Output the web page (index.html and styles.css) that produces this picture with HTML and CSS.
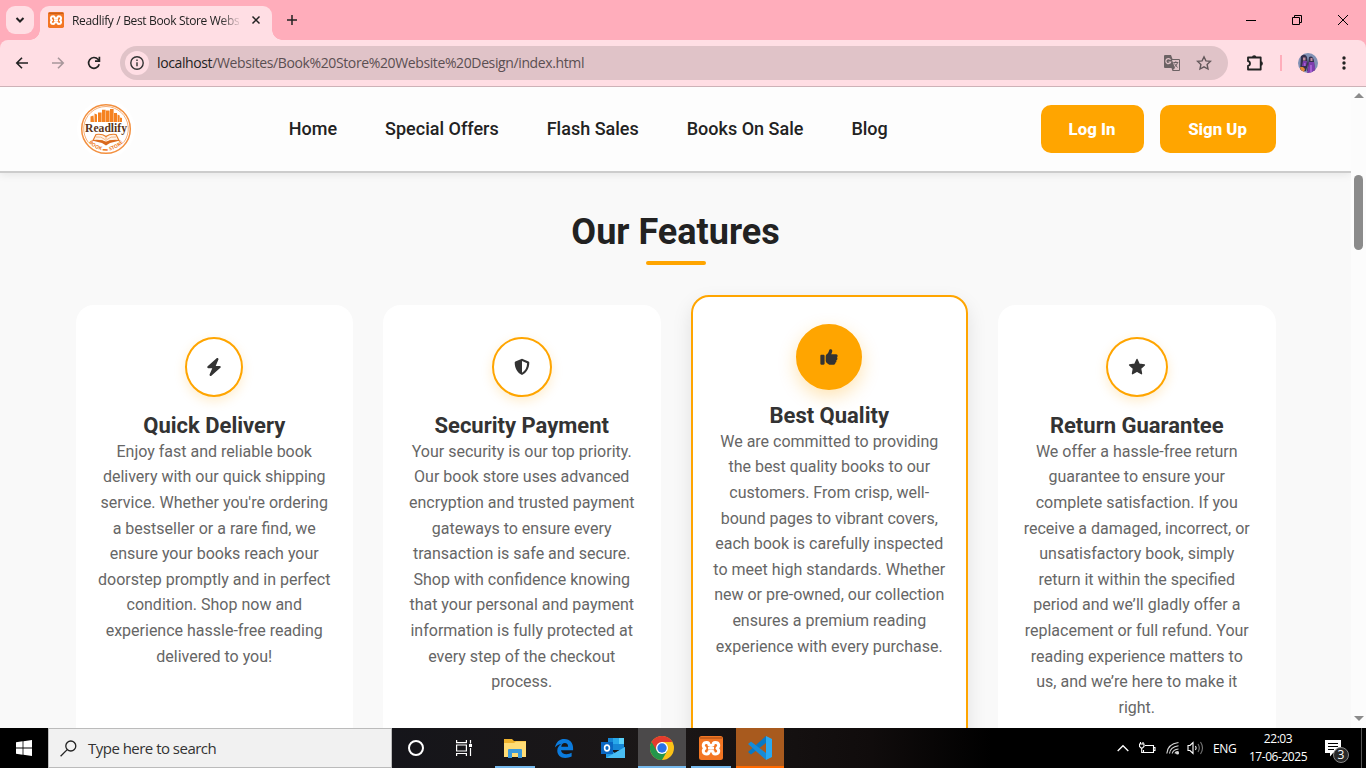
FILE: index.html
```html
<!DOCTYPE html>
<html lang="en">
<head>
<meta charset="utf-8">
<title>Readlify / Best Book Store Website</title>
<link rel="stylesheet" href="styles.css">
</head>
<body>
<svg class="defs" width="0" height="0">
  <symbol id="xampp" viewBox="0 0 24 24">
    <rect width="24" height="24" rx="2.5" fill="#f37623"/>
    <path d="M1 1h22v2H1z" fill="#c95f1b"/>
    <path d="M7.800 6.500C3.500 6.500 3.500 10.500 6 12.300 3.500 14 3.500 18 7.800 18q2.200 0 2.200-2.500 2-1 4 0 0 2.500 2.200 2.500c4.300 0 4.300-4 1.800-5.700 2.500-1.800 2.500-5.800-1.800-5.800Q14 6.500 14 9q-2 1-4 0 0-2.500-2.200-2.500z" fill="#f37623" stroke="#fff" stroke-width="3" stroke-linejoin="round"/>
    <path d="M9 12.200h6" stroke="#fff" stroke-width="2.600"/>
  </symbol>
</svg>
<div class="screen">
  <div class="tabstrip">
    <div class="tab-search"><svg width="10" height="10" viewBox="0 0 10 10"><path d="M1.500 3 5 6.500 8.500 3" fill="none" stroke="#222" stroke-width="2"/></svg></div>
    <div class="tab">
      <svg class="favicon" width="16" height="16"><use href="#xampp"/></svg>
      <span class="tab-title">Readlify / Best Book Store Webs</span>
      <svg class="tab-close" width="10" height="10" viewBox="0 0 10 10"><path d="m1.500 1.500 7 7m0-7-7 7" stroke="#222" stroke-width="1.500"/></svg>
    </div>
    <svg class="new-tab" width="12" height="12" viewBox="0 0 12 12"><path d="M6 1v10M1 6h10" stroke="#222" stroke-width="1.500"/></svg>
    <div class="win-controls">
      <svg width="12" height="12" viewBox="0 0 12 12"><path d="M1 6.500h10" stroke="#000"/></svg>
      <svg width="12" height="12" viewBox="0 0 12 12" fill="none" stroke="#000"><path d="M1.500 3.500h7v7h-7zM3.500 3.500v-2h7v7h-2"/></svg>
      <svg width="12" height="12" viewBox="0 0 12 12"><path d="m1 1 10 10m0-10L1 11" stroke="#000"/></svg>
    </div>
  </div>
  <div class="toolbar">
    <div class="nav-icons">
      <svg width="14" height="14" viewBox="0 0 14 14" fill="none" stroke="#222" stroke-width="1.600"><path d="M13 7H2M7 1.800 1.800 7 7 12.200"/></svg>
      <svg width="14" height="14" viewBox="0 0 14 14" fill="none" stroke="#a8979b" stroke-width="1.600"><path d="M1 7H12M7 1.800 12.200 7 7 12.200"/></svg>
      <svg width="14" height="14" viewBox="0 0 14 14" fill="none" stroke="#222" stroke-width="1.700"><path d="M12.200 8.300A5.400 5.400 0 1 1 11 3.300L12.500 5"/><path d="M12.400 .8v4.400H8"/></svg>
    </div>
    <div class="omnibox">
      <div class="info"><svg width="16" height="16" viewBox="0 0 16 16" fill="none" stroke="#333" stroke-width="1.400"><circle cx="8" cy="8" r="6.200"/><path d="M8 7.300v4M8 4.500v1.500"/></svg></div>
      <span class="url"><b>localhost</b>/Websites/Book%20Store%20Website%20Design/index.html</span>
      <svg class="translate" width="18" height="18" viewBox="0 0 18 18"><path d="M2 1h6l1.500 4H16q1 0 1 1v10q0 1-1 1H9.500L8.500 14H2q-1 0-1-1V2q0-1 1-1z" fill="#6c6264"/><path d="M9 6h7v10h-6l2-2z" fill="#e0c3c8"/><path d="M7.500 5.800A2.500 2.500 0 1 0 7.700 8H5.500" fill="none" stroke="#e0c3c8" stroke-width="1.200"/><path d="M10.300 8.500h5M12.800 7.300v1.200M14.500 8.500c-.4 2-1.800 3.500-3 4.500M11.300 9.500l3.200 4" fill="none" stroke="#6c6264"/></svg>
      <svg class="star" width="16" height="16" viewBox="0 0 16 16"><path d="m8 1.800 1.900 4.100 4.500.5-3.300 3.100.9 4.500L8 11.800 4 14l.9-4.500-3.300-3.100 4.500-.5z" fill="none" stroke="#63585b" stroke-width="1.400"/></svg>
    </div>
    <svg class="puzzle" width="18" height="18" viewBox="0 0 18 18"><path d="M2 3.500h12.700v12H2v-3.700q2-.3 2-2.300t-2-2.300z" fill="none" stroke="#222" stroke-width="1.800" stroke-linejoin="round"/><path d="M6 3.500a2.200 2.200 0 0 1 4.400 0zM14.700 7.300a2.200 2.200 0 0 1 0 4.400z" fill="#222"/></svg>
    <i class="divider"></i>
    <svg class="avatar" width="20" height="20" viewBox="0 0 20 20"><clipPath id="av"><circle cx="10" cy="10" r="10"/></clipPath><g clip-path="url(#av)"><path fill="#8090b4" d="M0 0h20v20H0z"/><path fill="#352f4e" d="M3 3q4-3 6 1l1 7-2 7H2zM11 4q4-2 5 4l1 10H9z"/><path fill="#7d3cad" d="M11 9l5 0 2 11H9zM5 8h4l-1 5H4z"/><path fill="#c28fa0" d="M5 4.500h2.500v3H5zM12.500 5h2v3h-2z"/><path fill="#e38a38" d="M2 14h3l2 2-1 3H3z"/><path fill="#a55fd0" d="M12 12h2v8h-2zM6 10h1.500v3H6z"/></g></svg>
    <svg class="more" width="4" height="14" viewBox="0 0 4 14" fill="#222"><circle cx="2" cy="2" r="1.700"/><circle cx="2" cy="7" r="1.700"/><circle cx="2" cy="12" r="1.700"/></svg>
  </div>

  <div class="viewport">
    <div class="page">
      <header class="site-header">
        <div class="container header-row">
          <svg class="logo" width="60" height="60" viewBox="0 0 60 60">
            <circle cx="30" cy="30" r="29" fill="#fff"/>
            <circle cx="30" cy="30" r="24.300" fill="none" stroke="#f3903f" stroke-width="1.500"/><path d="M12.400 43.500A22.300 22.300 0 1 1 47.600 43.500" fill="none" stroke="#f5a669" stroke-width=".9"/>
            <path fill="#f58220" d="M14.500 17.500l3-1 .5 6.500h-3.500zM18.500 14.500l2.500 1V23h-2.500zM22 13.500h3.600V23H22zM26 10.800h3.600V23H26zM30 11.500h3.600V23H30zM34 10h3.600v13H34zM38 14h3v9h-3zM41.500 15.500l2.200 1V23h-2.200zM44 18.500l2 .5v4h-2z"/>
            <text class="logo-name" x="30" y="32.500" text-anchor="middle" textLength="42" lengthAdjust="spacingAndGlyphs">Readlify</text>
            <path d="M30 37.500q-4-3-10-2L17 41.500q8-1 13 2 5-3 13-2L40 35.500Q34 34.500 30 37.500z" fill="#fff3e8" stroke="#e97d28" stroke-width="1.200"/><path d="M30 38v5M20 38q5-1 9 2.500M40 38q-5-1-9 2.500" fill="none" stroke="#f19a57" stroke-width=".7"/><path d="M16 41.500q10-1.500 14 1.500 4-3 14-1.500l-10 2.500-4 2.500-4-2.500z" fill="#d9681d"/>
            <path id="arc" d="M11 41A22.300 22.300 0 0 0 49 41" fill="none"/>
            <text class="logo-sub"><textPath href="#arc" startOffset="50%" text-anchor="middle">BOOK ▬ STORE</textPath></text>
          </svg>
          <nav class="menu"><a>Home</a><a>Special Offers</a><a>Flash Sales</a><a>Books On Sale</a><a>Blog</a></nav>
          <div class="actions"><a class="btn login">Log In</a><a class="btn signup">Sign Up</a></div>
        </div>
      </header>
      <main class="features">
        <h2>Our Features</h2>
        <div class="container cards">
          <article class="card">
            <div class="icon bolt"><svg width="18" height="18" viewBox="0 0 512 512"><path transform="translate(32 0)" d="M349.400 44.600c5.900-13.700 1.500-29.700-10.600-38.500s-28.600-8-39.900 1.800l-256 224c-10 8.800-13.600 22.900-8.900 35.300S50.700 288 64 288h111.500L98.600 467.400c-5.900 13.700-1.500 29.700 10.600 38.500s28.600 8 39.900-1.800l256-224c10-8.800 13.600-22.900 8.900-35.300s-16.600-20.700-30-20.700H272.500L349.400 44.600z"/></svg></div>
            <h3>Quick Delivery</h3>
            <p>Enjoy fast and reliable book<br>delivery with our quick shipping<br>service. Whether you're ordering<br>a bestseller or a rare find, we<br>ensure your books reach your<br>doorstep promptly and in perfect<br>condition. Shop now and<br>experience hassle-free reading<br>delivered to you!</p>
          </article>
          <article class="card">
            <div class="icon shield"><svg width="18" height="18" viewBox="0 0 18 18"><path fill-rule="evenodd" d="M9 .8 15.600 3.500q.7.300.7 1C16.300 10 13.700 14.900 9 17 4.300 14.900 1.700 10 1.700 4.500q0-.7.7-1zM9 3v11.700c3.200-1.800 5-5.300 5.100-9.500z"/></svg></div>
            <h3>Security Payment</h3>
            <p>Your security is our top priority.<br>Our book store uses advanced<br>encryption and trusted payment<br>gateways to ensure every<br>transaction is safe and secure.<br>Shop with confidence knowing<br>that your personal and payment<br>information is fully protected at<br>every step of the checkout<br>process.</p>
          </article>
          <article class="card active">
            <div class="icon thumb"><svg width="16" height="16" viewBox="0 0 512 512"><path d="M313.400 32.900c26 5.200 42.900 30.500 37.700 56.500l-2.300 11.400c-5.300 26.700-15.100 52.100-28.800 75.200H464c26.500 0 48 21.500 48 48 0 18.500-10.500 34.600-25.900 42.600C497 275.400 504 288.900 504 304c0 23.400-16.800 42.900-38.900 47.100 4.400 7.300 6.900 15.800 6.900 24.900 0 21.300-13.900 39.400-33.100 45.600.7 3.300 1.100 6.800 1.100 10.400 0 26.500-21.500 48-48 48h-97.500c-19 0-37.500-5.600-53.300-16.100l-38.500-25.700C176 420.400 160 390.400 160 358.300V247.100c0-29.200 13.300-56.700 36-75l7.400-5.900c26.500-21.200 44.600-51 51.200-84.200l2.300-11.400c5.200-26 30.500-42.900 56.500-37.700zM32 192h64c17.700 0 32 14.300 32 32v224c0 17.700-14.300 32-32 32H32c-17.700 0-32-14.300-32-32V224c0-17.700 14.300-32 32-32z"/></svg></div>
            <h3>Best Quality</h3>
            <p>We are committed to providing<br>the best quality books to our<br>customers. From crisp, well-<br>bound pages to vibrant covers,<br>each book is carefully inspected<br>to meet high standards. Whether<br>new or pre-owned, our collection<br>ensures a premium reading<br>experience with every purchase.</p>
          </article>
          <article class="card">
            <div class="icon rate"><svg width="18" height="18" viewBox="0 0 18 18"><path d="m9 1.500 2.200 4.700 5.200.7-3.800 3.600.9 5.200L9 13.200l-4.500 2.500.9-5.200L1.600 6.900l5.200-.7z" stroke="#333" stroke-width="1.400" stroke-linejoin="round"/></svg></div>
            <h3>Return Guarantee</h3>
            <p>We offer a hassle-free return<br>guarantee to ensure your<br>complete satisfaction. If you<br>receive a damaged, incorrect, or<br>unsatisfactory book, simply<br>return it within the specified<br>period and we’ll gladly offer a<br>replacement or full refund. Your<br>reading experience matters to<br>us, and we’re here to make it<br>right.</p>
          </article>
        </div>
      </main>
    </div>
    <div class="scrollbar"><i class="up"></i><i class="bar"></i><i class="down"></i></div>
  </div>

  <footer class="taskbar">
    <div class="start"><svg width="16" height="16" viewBox="0 0 16 16" fill="#fff"><path d="M0 2.200 6.600 1.300v6.300H0zM7.400 1.200 16 0v7.600H7.400zM0 8.400h6.600v6.300L0 13.800zM7.400 8.400H16V16l-8.600-1.200z"/></svg></div>
    <div class="search"><svg width="17" height="17" viewBox="0 0 17 17" fill="none" stroke="#222" stroke-width="1.300"><circle cx="10.800" cy="6" r="5"/><path d="M7.200 9.600.6 16.200"/></svg><span>Type here to search</span></div>
    <div class="apps">
      <div class="app"><svg width="18" height="18" viewBox="0 0 18 18"><circle cx="9" cy="9" r="7" fill="none" stroke="#fff" stroke-width="2"/></svg></div>
      <div class="app taskview"><svg width="18" height="16" viewBox="0 0 18 16" fill="none" stroke="#fff" stroke-width="1.200"><path d="M1.600 0v2.600h9.800V0M1.600 5h9.800v6H1.600zM1.600 16v-2.500h9.800V16M15.500 0v3.500M15.500 8v8"/><path d="M14 4h3v3h-3z" fill="#fff" stroke="none"/></svg></div>
      <div class="app open explorer"><svg width="22" height="19" viewBox="0 0 22 19"><path d="M0 0h8l2 2h12v16H0z" fill="#eeb22d"/><path d="M0 4h10l2-1.500h10V18H0z" fill="#ffdc75"/><path d="M4 11q0-1 1-1h12q1 0 1 1v8h-4v-5H8v5H4z" fill="#3c9ada"/></svg></div>
      <div class="app"><svg width="20" height="21" viewBox="0 0 22 22"><path d="M1 10C2.500 3.500 6 .6 11.500.6 18 .6 21 5.500 21 10.500V13H7.700c.3 3 3 4.400 6 4.400 2.200 0 4-.6 5.700-1.600v4c-2 1-4.300 1.600-7 1.600C7 21.400 3.600 18 3.600 13.500c0-4 2.300-6.500 5-7.800C5.500 6 2.800 7.500 1 10zm7-1h7.500c0-2.500-1.300-4-3.600-4C9.500 5 8.300 6.700 8 9z" fill="#0b7bdd"/></svg></div>
      <div class="app"><svg width="24" height="22" viewBox="0 0 24 22"><path d="M7 1h16v12H7z" fill="#1687d6"/><path d="M12 1h6v6h-6z" fill="#28a8ea"/><path d="M18 1h5v6h-5z" fill="#5bd3fb"/><path d="M5 10l9 6 10-6v11H5z" fill="#1f9be5"/><path d="m24 10-19 11h19z" fill="#49bdf3"/><path d="M0 5h12v12H0z" fill="#0a67c2"/><ellipse cx="6" cy="11" rx="2.400" ry="2.900" fill="none" stroke="#fff" stroke-width="1.600"/></svg></div>
      <div class="app open chrome"><svg width="24" height="24" viewBox="0 0 24 24"><circle cx="12" cy="12" r="12" fill="#fbc117"/><path d="M1.600 6A12 12 0 0 0 12 24l5.200-9L12 12z" fill="#24964a"/><path d="M12 6h10.400A12 12 0 0 0 1.600 6l5.200 9z" fill="#e33b2e"/><circle cx="12" cy="12" r="6" fill="#fff"/><circle cx="12" cy="12" r="4.700" fill="#2a72e8"/></svg></div>
      <div class="app open"><svg width="24" height="24"><use href="#xampp"/></svg></div>
      <div class="app vscode"><svg width="24" height="24" viewBox="0 0 24 24"><path d="M18 0v7L3 18.500 0 16z" fill="#0879c4"/><path d="M18 24v-7L3 5.500 0 8z" fill="#168bd8"/><path d="m18 0 6 3v18l-6 3z" fill="#29a9f2"/></svg></div>
    </div>
    <div class="tray">
      <svg class="chev" width="12" height="8" viewBox="0 0 12 8"><path d="m.7 7 5.300-5.300L11.300 7" fill="none" stroke="#fff" stroke-width="1.300"/></svg>
      <svg class="battery" width="17" height="14" viewBox="0 0 17 14" fill="none" stroke="#fff" stroke-width="1.100"><path d="M6 4.500h8.500v7H4.500V9M14.500 6.500H16v3h-1.500M1.500 1v2M4 1v2M.5 3h4.500v2.500L3.500 7H2L.5 5.500zM2.700 7v4.500h2"/></svg>
      <svg class="wifi" width="14" height="14" viewBox="0 0 14 14" fill="none" stroke="#d5d5d5" stroke-width="1.100"><path d="M.8 12.500Q1.500 3 12.500 1.500M3.500 12.500Q4 6 12.500 4.700M6.200 12.500Q7 8.500 12.500 8M9 12.500q.5-2 3.500-2"/><circle cx="11.500" cy="12" r="1" fill="#fff"/></svg>
      <svg class="volume" width="17" height="14" viewBox="0 0 17 14" fill="none" stroke="#fff" stroke-width="1.100"><path d="M1 4.500h2l3-3v11l-3-3H1z"/><path d="M8.500 5q1.300 2 0 4"/><path d="M11 3q2.600 4 0 8M13.500 1q4 6 0 12" stroke="#777"/></svg>
      <span class="lang">ENG</span>
      <div class="clock"><span>22:03</span><span>17-06-2025</span></div>
      <div class="notify"><svg width="17" height="17" viewBox="0 0 17 17"><path d="M0 0h16v13H8l-3 3.500V13H0z" fill="#fff"/><path d="M3 3.500h10M3 6.500h10M3 9.500h6" stroke="#000"/></svg><b>3</b></div>
      <i class="peek"></i>
    </div>
  </footer>
</div>
</body>
</html>
```

FILE: styles.css
```css
* { box-sizing: border-box; margin: 0; padding: 0; }
body { font-family: Roboto, sans-serif; overflow: hidden; }
svg { display: block; flex: none; }
.defs { position: absolute; }
.screen { width: 1366px; height: 768px; display: flex; flex-direction: column; overflow: hidden; background: #ffadbb; }

/* browser chrome */
.tabstrip { height: 40px; flex: none; background: #ffadbb; display: flex; align-items: flex-start; padding-left: 6px; font-family: "Open Sans", sans-serif; }
.tab-search { width: 28px; height: 28px; margin-top: 6px; border-radius: 9px; background: #ffdee4; display: grid; place-items: center; }
.tab { width: 232px; height: 34px; margin: 6px 0 0 6px; background: #ffdee4; border-radius: 9px 9px 0 0; display: flex; align-items: center; padding: 0 11px 6px 8px; position: relative; }
.tab::before, .tab::after { content: ""; position: absolute; bottom: 0; width: 10px; height: 10px; }
.tab::before { left: -10px; background: radial-gradient(circle at 0 0, transparent 9.5px, #ffdee4 10px); }
.tab::after { right: -10px; background: radial-gradient(circle at 100% 0, transparent 9.5px, #ffdee4 10px); }
.tab-title { margin-left: 8px; font-size: 12px; letter-spacing: -.34px; color: #222; white-space: nowrap; mask-image: linear-gradient(90deg, #000 148px, transparent 170px); }
.tab-close { margin-left: auto; }
.new-tab { margin: 14px 0 0 14px; }
.win-controls { margin: 14px 17px 0 auto; display: flex; gap: 34px; }
.toolbar { height: 47px; flex: none; background: #ffdee4; border-bottom: 1px solid #cdb2b7; border-radius: 8px 8px 0 0; display: flex; align-items: center; padding: 0 20px 0 15px; }
.nav-icons { display: flex; gap: 22px; }
.omnibox { width: 1108px; height: 34px; margin-left: 19px; border-radius: 17px; background: #e0c3c8; display: flex; align-items: center; padding: 0 16px 0 5px; font-family: "Open Sans", sans-serif; }
.info { width: 24px; height: 24px; border-radius: 50%; background: #ffdee4; display: grid; place-items: center; }
.url { margin-left: 8px; padding-bottom: 1px; font-size: 14px; letter-spacing: -.38px; color: #5b4f52; white-space: nowrap; }
.url b { font-weight: 400; color: #222; }
.translate { margin-left: auto; }
.star { margin-left: 15px; }
.puzzle { margin-left: 18px; }
.divider { width: 2px; height: 16px; background: #ffadbb; margin-left: 16px; }
.avatar { margin-left: 16px; }
.more { margin-left: auto; }

/* page */
.viewport { height: 641px; flex: none; display: flex; overflow: hidden; }
.page { width: 1351px; background: #f9f9f9; overflow: hidden; }
.container { width: 1200px; margin: 0 auto; }
.site-header { height: 86px; background: #fdfdfd; border-bottom: 2px solid #ccc; box-shadow: 0 2px 8px rgba(0,0,0,.08); position: relative; }
.header-row { height: 84px; display: flex; align-items: center; }
.logo-name { font: bold 12.5px "Liberation Serif", serif; fill: #5a3518; }
.logo-sub { font: bold 5px "Open Sans", sans-serif; fill: #ee7c25; letter-spacing: .1px; }
.menu { display: flex; gap: 48px; margin-left: 153.3px; padding-bottom: 2px; font-size: 18px; font-weight: 500; color: #222; white-space: nowrap; }
.actions { display: flex; gap: 16px; margin-left: auto; }
.btn { height: 48px; border-radius: 10px; background: #ffa500; color: #fff; font-size: 16.8px; font-weight: 800; display: grid; place-items: center; }
.login { width: 103px; }
.signup { width: 116px; }
.features { padding-top: 37px; }
.features h2 { font-size: 36px; line-height: 44px; font-weight: 700; color: #222; text-align: center; }
.features h2::after { content: ""; display: block; width: 60px; height: 4px; border-radius: 2px; background: #ffa500; margin: 7px auto 0; }
.cards { display: grid; grid-template-columns: repeat(4, 1fr); gap: 30px; padding-top: 40px; }
.card { height: 480px; background: #fff; border-radius: 18px; padding-top: 32px; text-align: center; }
.icon { height: 60px; width: 60px; margin: 0 auto; border: 2px solid #ffa500; border-radius: 50%; display: grid; place-items: center; background: #fff; box-shadow: 0 4px 12px rgba(255,165,0,.2); }
.icon svg { fill: #333; }
.bolt { width: 58px; }
.rate { width: 62px; }
.card h3 { margin-top: 16px; font-size: 22px; line-height: 26px; font-weight: 700; color: #333; }
.card p { margin-top: -.2px; font-size: 16px; line-height: 25.6px; color: #666; white-space: nowrap; }
.active { border: 2px solid #ffa500; padding-top: 30px; transform: translateY(-10px); box-shadow: 0 8px 20px rgba(0,0,0,.1); }
.active .icon { background: #ffa500; transform: scale(1.1); box-shadow: 0 6px 16px rgba(255,165,0,.3); }
.scrollbar { width: 15px; background: #fcfcfc; display: flex; flex-direction: column; align-items: center; padding: 6px 0 7px; }
.up, .down { border: 5px solid transparent; border-top: 0; border-bottom: 5px solid #8b8b8b; }
.bar { width: 9px; height: 75px; margin-top: 77px; border-radius: 5px; background: #8b8b8b; }
.down { transform: rotate(180deg); margin-top: auto; }

/* taskbar */
.taskbar { height: 40px; flex: none; background: #000; display: flex; color: #fff; font-family: "Open Sans", sans-serif; }
.start { width: 48px; display: grid; place-items: center; }
.search { width: 344px; background: #f1f1f1; border: 1px solid #bbb; display: flex; align-items: center; padding-left: 11px; color: #333; font-size: 15px; }
.search span { margin-left: 11px; letter-spacing: -.52px; }
.apps { display: flex; gap: 1px; background: linear-gradient(90deg, #15151a, #1b1717 45%, #100c0c 80%, #000); width: 600px; }
.app { width: 48px; height: 40px; display: grid; place-items: center; position: relative; }
.taskview { margin-left: -1px; }
.explorer { margin-left: 2px; }
.open::after { content: ""; position: absolute; left: 4px; right: 4px; bottom: 0; height: 2px; background: #76b9ed; }
.chrome { background: #4b494a; }
.chrome::after { left: 0; right: 0; }
.vscode { background: #a85a1e; }
.vscode::after { content: ""; position: absolute; inset: auto 0 0; height: 2px; background: #ff6a00; }
.tray { margin-left: auto; display: flex; align-items: center; font-size: 12px; }
.battery { margin-left: 10px; }
.wifi { margin-left: 10px; }
.volume { margin-left: 7px; }
.lang { margin-left: 9px; width: 23px; letter-spacing: -.3px; }
.clock { width: 60px; margin-left: 12px; display: flex; flex-direction: column; align-items: center; line-height: 18px; letter-spacing: -.45px; white-space: nowrap; }
.notify { margin-left: 17px; width: 25px; position: relative; }
.notify b { position: absolute; left: 8px; top: 7px; width: 16px; height: 16px; border: 1px solid #888; border-radius: 50%; background: #282828; font-size: 12px; font-weight: 400; line-height: 14px; text-align: center; }
.peek { width: 1px; height: 40px; margin: 0 4px 0 11px; background: #555; }
```
